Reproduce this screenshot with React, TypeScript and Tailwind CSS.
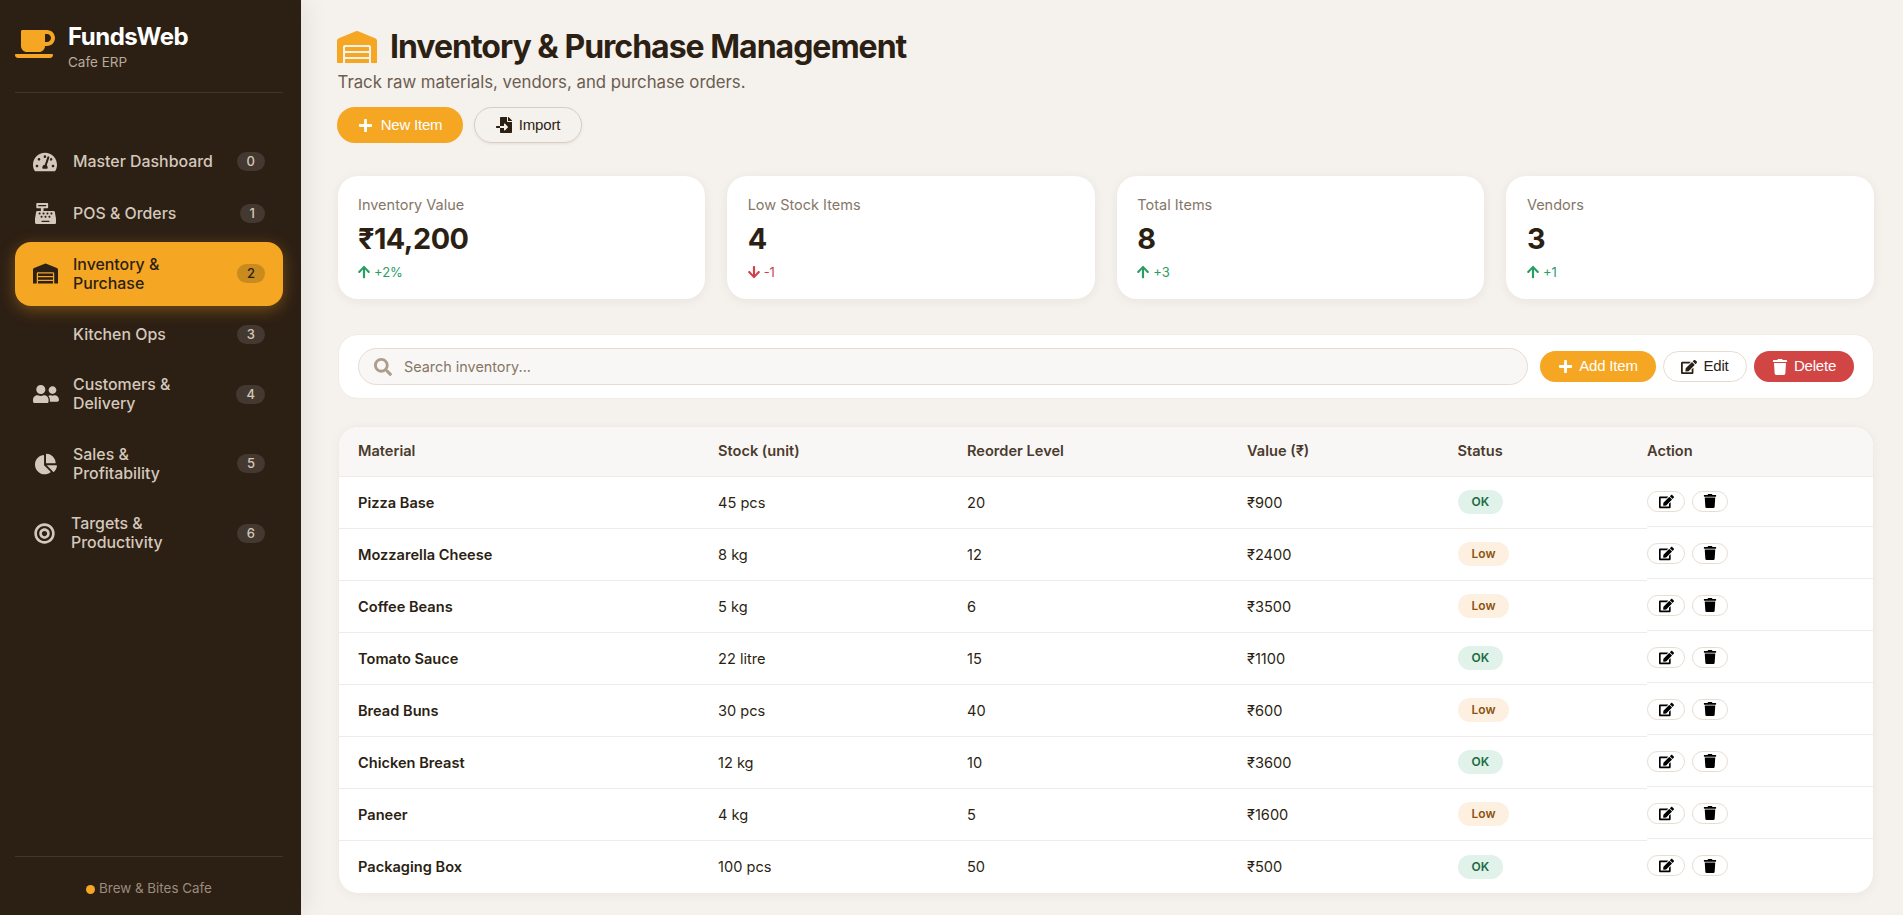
import type { ReactNode } from "react";
import {
  FaArrowDown,
  FaArrowUp,
  FaBullseye,
  FaCashRegister,
  FaChartPie,
  FaCoffee,
  FaEdit,
  FaFileImport,
  FaPlus,
  FaSearch,
  FaTachometerAlt,
  FaTrash,
  FaUserFriends,
  FaWarehouse,
} from "react-icons/fa";

const nav = [
  { label: ["Master Dashboard"], icon: <FaTachometerAlt className="h-6 w-6" />, w: "w-[40px]", h: "h-[47.5px]" },
  { label: ["POS & Orders"], icon: <FaCashRegister className="h-[21px] w-[21px]" />, w: "w-[40px]", ml: "ml-[2px]", h: "h-[46px]" },
  { label: ["Inventory &", "Purchase"], icon: <FaWarehouse className="h-[25px] w-[25px]" />, w: "w-[40px]", active: true, h: "h-[64.5px]" },
  { label: ["Kitchen Ops"], icon: null, w: "w-[40px]", h: "h-[46px]" },
  { label: ["Customers &", "Delivery"], icon: <FaUserFriends className="h-[26px] w-[26px]" />, w: "w-[40px]", h: "h-[64.5px]" },
  { label: ["Sales &", "Profitability"], icon: <FaChartPie className="h-[22px] w-[22px]" />, w: "w-[40px]", ml: "ml-[2px]", h: "h-[64.5px]" },
  { label: ["Targets &", "Productivity"], icon: <FaBullseye className="h-[21px] w-[21px]" />, w: "w-[38px]", ml: "ml-[1px]", h: "h-[64.5px]" },
];

const stats = [
  { label: "Inventory Value", value: "₹14,200", delta: "+2%", up: true },
  { label: "Low Stock Items", value: "4", delta: "-1", up: false },
  { label: "Total Items", value: "8", delta: "+3", up: true },
  { label: "Vendors", value: "3", delta: "+1", up: true },
];

const rows = [
  ["Pizza Base", "45 pcs", "20", "₹900", "OK"],
  ["Mozzarella Cheese", "8 kg", "12", "₹2400", "Low"],
  ["Coffee Beans", "5 kg", "6", "₹3500", "Low"],
  ["Tomato Sauce", "22 litre", "15", "₹1100", "OK"],
  ["Bread Buns", "30 pcs", "40", "₹600", "Low"],
  ["Chicken Breast", "12 kg", "10", "₹3600", "OK"],
  ["Paneer", "4 kg", "5", "₹1600", "Low"],
  ["Packaging Box", "100 pcs", "50", "₹500", "OK"],
];

const btnFont = "font-['Liberation_Sans',Arial,sans-serif]";

function PillButton({ className, children }: { className: string; children: ReactNode }) {
  return (
    <button
      className={`flex items-center justify-center rounded-full text-[15px] tracking-[-0.2px] ${btnFont} ${className}`}
    >
      {children}
    </button>
  );
}

function Sidebar() {
  return (
    <aside className="flex h-[915px] w-[301px] shrink-0 flex-col bg-[#2c1f14] pr-[18px] pl-[15px] shadow-[4px_0_24px_rgba(44,31,20,0.08)]">
      <div className="flex h-[93px] items-start border-b border-[#42362b] pt-[24px]">
        <div className="w-[53px] pt-[2px]">
          <FaCoffee className="h-[36px] w-[40px] text-[#f5a623]" />
        </div>
        <div>
          <div className="text-[24px] leading-[26px] font-bold tracking-[-0.5px] text-white">FundsWeb</div>
          <div className="mt-[3px] text-[13.5px] leading-[18px] text-[#b8ab9b]">Cafe ERP</div>
        </div>
      </div>

      <nav className="mt-[45px] flex flex-col gap-[5px]">
        {nav.map((item, i) => (
          <div
            key={item.label[0]}
            className={`flex items-center rounded-[16px] pr-[18px] pl-[18px] text-[15.9px] leading-[19px] font-medium ${item.h} ${
              item.active
                ? "bg-[#f5a623] text-[#2c1f14] shadow-[0_4px_16px_rgba(245,166,35,0.35)]"
                : "text-[#d4c8bb]"
            }`}
          >
            <span className={`flex shrink-0 items-center ${item.w}`}>
              <span className={item.ml}>{item.icon}</span>
            </span>
            <span className="flex-1">
              {item.label.map((line) => (
                <span key={line} className="block">
                  {line}
                </span>
              ))}
            </span>
            <span
              className={`flex h-[19px] items-center justify-center rounded-full px-[10px] text-[13px] leading-none font-medium ${
                item.active ? "bg-[#c98a1e] text-[#2c1f14]" : "bg-[#443930] text-[#d4c8bb]"
              }`}
            >
              {i}
            </span>
          </div>
        ))}
      </nav>

      <div className="mt-auto flex h-[59px] items-start justify-center border-t border-[#42362b] pt-[22px] text-[13.4px] leading-[18px] text-[#9a8c7c]">
        <span className="mt-[6px] mr-[4px] h-[9px] w-[9px] rounded-full bg-[#f5a623]" />
        Brew &amp; Bites Cafe
      </div>
    </aside>
  );
}

function StatusPill({ status }: { status: string }) {
  return status === "OK" ? (
    <span className="inline-block rounded-full bg-[#e0f2ea] px-[14px] py-[3px] text-[12px] leading-[18px] font-semibold text-[#1c6b44]">
      OK
    </span>
  ) : (
    <span className="inline-block rounded-full bg-[#fdf0e0] px-[14px] py-[3px] text-[12px] leading-[18px] font-semibold text-[#8c5314]">
      Low
    </span>
  );
}

export default function App() {
  return (
    <div className="flex h-[915px] overflow-hidden bg-[#f5f1ec] font-['Inter',sans-serif] text-[#2c1f14]">
      <Sidebar />
      <main className="min-w-0 flex-1 pt-[26px] pr-[29px] pl-[36.5px]">
        <header>
          <h1 className="flex items-center gap-[13.5px] text-[32px] leading-[36px] font-bold tracking-[-1px]">
            <FaWarehouse className="-ml-[1px] h-[42px] w-[40px] text-[#f5a623]" />
            Inventory &amp; Purchase Management
          </h1>
          <p className="mt-[2px] text-[16.8px] leading-[24px] text-[#6b5d50]">
            Track raw materials, vendors, and purchase orders.
          </p>
          <div className="mt-[13px] -ml-[0.5px] flex gap-[11px]">
            <PillButton className="h-[36px] w-[126px] gap-[8px] bg-[#f5a623] text-white">
              <FaPlus className="h-[15px] w-[15px]" /> New Item
            </PillButton>
            <PillButton className="h-[36px] w-[108px] gap-[7px] border border-[#d9ccc0] text-[#2c1f14] shadow-[0_1px_3px_rgba(44,31,20,0.08)]">
              <FaFileImport className="h-[16px] w-[16px]" /> Import
            </PillButton>
          </div>
        </header>

        <section className="mt-[33px] grid grid-cols-4 gap-[22px]">
          {stats.map((s) => (
            <div
              key={s.label}
              className="h-[122.5px] rounded-[20px] bg-white px-[20.5px] pt-[20px] shadow-[0_2px_12px_rgba(44,31,20,0.06)]"
            >
              <div className="text-[14.5px] leading-[18px] text-[#857667]">{s.label}</div>
              <div className="mt-[7px] text-[28.8px] leading-[36px] font-bold tracking-[-0.5px]">{s.value}</div>
              <div
                className={`mt-[6px] flex items-center gap-[3px] text-[13px] leading-[18px] ${
                  s.up ? "text-[#2a9d64]" : "text-[#d23f4f]"
                }`}
              >
                {s.up ? <FaArrowUp className="-ml-[1px] h-[14px] w-[14px]" /> : <FaArrowDown className="-ml-[1px] h-[14px] w-[14px]" />}
                {s.delta}
              </div>
            </div>
          ))}
        </section>

        <section className="mt-[35.5px] flex h-[65px] items-center rounded-[20px] border border-[#f0ebe5] bg-white pr-[19px] pl-[19.5px]">
          <div className="mr-[12px] flex h-[37px] flex-1 items-center gap-[12px] rounded-full border border-[#e6dcd2] bg-[#f9f7f5] pl-[15px]">
            <FaSearch className="h-[18px] w-[18px] text-[#ae9d8b]" />
            <span className="text-[14.4px] text-[#857667]">Search inventory...</span>
          </div>
          <div className="flex gap-[7px]">
            <PillButton className="h-[31px] w-[116px] gap-[6px] bg-[#f5a623] text-white">
              <FaPlus className="h-[15px] w-[15px]" /> Add Item
            </PillButton>
            <PillButton className="h-[31px] w-[84px] gap-[6px] border border-[#e6dcd2] bg-white text-[#2c1f14]">
              <FaEdit className="h-[16px] w-[16px]" /> Edit
            </PillButton>
            <PillButton className="h-[31px] w-[100px] gap-[6px] bg-[#d14545] text-white">
              <FaTrash className="h-[16px] w-[16px]" /> Delete
            </PillButton>
          </div>
        </section>

        <section className="mt-[26.5px] overflow-hidden rounded-[20px] border border-[#f0ebe5] bg-white shadow-[0_2px_12px_rgba(44,31,20,0.04)]">
          <table className="w-full table-fixed border-separate border-spacing-0 text-left text-[14.6px]">
            <thead>
              <tr className="h-[50px] bg-[#f9f7f5] text-[#4a3b2e]">
                <th className="w-[379.5px] border-b border-[#f0ebe5] pt-[1px] pl-[19.5px] font-semibold">Material</th>
                <th className="w-[249px] border-b border-[#f0ebe5] pt-[1px] font-semibold">Stock (unit)</th>
                <th className="w-[280px] border-b border-[#f0ebe5] pt-[1px] font-semibold">Reorder Level</th>
                <th className="w-[210.5px] border-b border-[#f0ebe5] pt-[1px] font-semibold">Value (₹)</th>
                <th className="w-[189.5px] border-b border-[#f0ebe5] pt-[1px] font-semibold">Status</th>
                <th className="border-b border-[#f0ebe5] pt-[1px] font-semibold">Action</th>
              </tr>
            </thead>
            <tbody>
              {rows.map((r, i) => {
                const line = i < rows.length - 1 ? "border-b border-[#f0ebe5]" : "";
                return (
                  <tr key={r[0]} className="h-[52px]">
                    <td className={`pt-[3px] pl-[19.5px] font-semibold ${line}`}>{r[0]}</td>
                    <td className={`pt-[3px] ${line}`}>{r[1]}</td>
                    <td className={`pt-[3px] ${line}`}>{r[2]}</td>
                    <td className={`pt-[3px] ${line}`}>{r[3]}</td>
                    <td className={line}>
                      <StatusPill status={r[4]} />
                    </td>
                    <td className={`flex h-[50px] items-center gap-[7px] ${line}`}>
                      <button className="flex h-[21px] w-[38px] items-center justify-center rounded-full border border-[#e6dcd2] text-black">
                        <FaEdit className="h-[15px] w-[15px]" />
                      </button>
                      <button className="flex h-[21px] w-[36px] items-center justify-center rounded-full border border-[#e6dcd2] text-black">
                        <FaTrash className="h-[14px] w-[14px]" />
                      </button>
                    </td>
                  </tr>
                );
              })}
            </tbody>
          </table>
        </section>
      </main>
    </div>
  );
}
